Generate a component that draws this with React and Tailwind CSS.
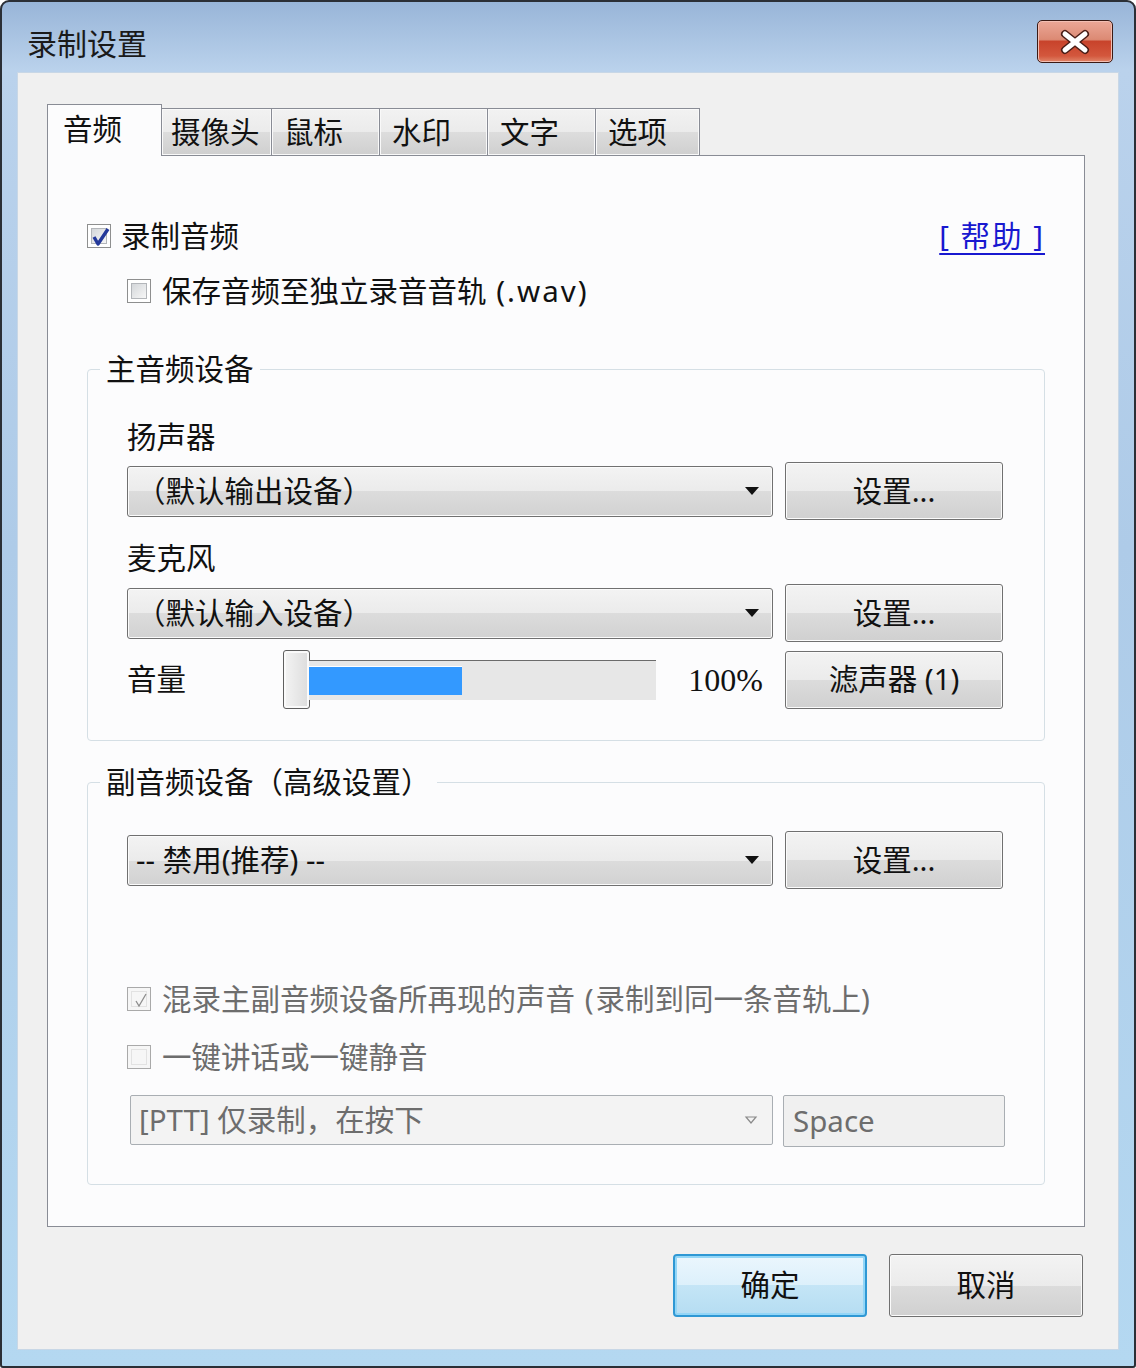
import React from "react";

// Win7 风格的按钮 / 下拉框渐变
const btnCls =
  "flex items-center justify-center rounded-[3px] border border-[#707070] bg-[linear-gradient(to_bottom,#f3f3f3_0%,#ebebeb_50%,#dcdcdc_50%,#d0d0d0_100%)] shadow-[inset_0_0_0_1px_#fbfbfb] text-[29.5px] text-[#111]";

function Arrow({ light }) {
  return (
    <svg width="14" height="8" viewBox="0 0 14 8">
      {light ? (
        <path d="M2 1 L12 1 L7 7 Z" fill="none" stroke="#8a8a8a" strokeWidth="1.2" />
      ) : (
        <path d="M0 0 L14 0 L7 8 Z" fill="#111" />
      )}
    </svg>
  );
}

function Combo({ text }) {
  return (
    <div className="flex h-[51px] w-[646px] items-center justify-between rounded-[3px] border border-[#707070] bg-[linear-gradient(to_bottom,#f3f3f3_0%,#ebebeb_50%,#dcdcdc_50%,#d2d2d2_100%)] pl-[8px] pr-[13px] text-[29.5px] text-[#111] shadow-[inset_0_0_0_1px_#fbfbfb]">
      <span>{text}</span>
      <Arrow />
    </div>
  );
}

function SettingBtn({ children }) {
  return <div className={`${btnCls} h-[58px] w-[218px]`}>{children}</div>;
}

function Check({ checked, dim }) {
  return (
    <span
      className={`flex h-[24px] w-[24px] shrink-0 items-center justify-center border p-[3px] ${
        dim ? "border-[#a9a9a9] bg-[#f6f6f6]" : "border-[#8e8f8f] bg-white"
      }`}
    >
      <span
        className={`relative flex h-full w-full items-center justify-center border ${
          dim
            ? "border-[#e2e2e2] bg-[#f6f6f6]"
            : "border-[#b3b6ba] bg-[linear-gradient(135deg,#d4d7da,#f7f7f7)]"
        }`}
      >
        {checked && !dim && (
          <svg className="absolute -left-[3px] -top-[3px]" width="24" height="24" viewBox="0 0 24 24">
            <path d="M5 11 L9 18 L19 3" fill="none" stroke="#24399a" strokeWidth="3.4" strokeLinejoin="round" />
          </svg>
        )}
        {checked && dim && (
          <svg className="absolute -left-[3px] -top-[3px]" width="24" height="24" viewBox="0 0 24 24">
            <path d="M7 12 L10 17 L17 5" fill="none" stroke="#8c8c8c" strokeWidth="1.3" />
          </svg>
        )}
      </span>
    </span>
  );
}

function Tab({ label, w, active, pl = "pl-[12px]" }) {
  if (active) {
    return (
      <div
        className={`${w} relative z-10 -mb-px h-[52px] border border-b-0 border-[#898c95] bg-[#fcfcfd] pl-[15px] pt-[4px] text-[29.5px] leading-[40px] text-[#111]`}
      >
        {label}
      </div>
    );
  }
  return (
    <div
      className={`${w} ${pl} -ml-px h-[47px] border border-b-0 border-[#898c95] bg-[linear-gradient(to_bottom,#f2f2f2_0%,#ebebeb_50%,#dddddd_50%,#cfcfcf_100%)] pt-[3px] text-[29.5px] leading-[40px] text-[#111] shadow-[inset_0_0_0_1px_#f9f9f9]`}
    >
      {label}
    </div>
  );
}

export default function App() {
  const tabs = [
    { label: "摄像头", w: "w-[111px]", pl: "pl-[9px]" },
    { label: "鼠标", w: "w-[109px]" },
    { label: "水印", w: "w-[109px]" },
    { label: "文字", w: "w-[109px]" },
    { label: "选项", w: "w-[105px]" },
  ];

  return (
    <div className="h-[1368px] w-[1136px] bg-white font-['Noto_Sans','Noto_Sans_CJK_SC',sans-serif]">
      <div className="flex h-full w-full flex-col rounded-t-[9px] rounded-b-[3px] border-2 border-[#2b2f36] bg-[linear-gradient(to_bottom,#98b5d8_0%,#bad2ec_5%,#aecbe8_40%,#b4d8f1_100%)]">
        {/* 标题栏 */}
        <div className="flex h-[70px] shrink-0 items-start justify-between pl-[25px] pr-[21px]">
          <span className="pt-[22px] text-[30px] leading-[40px] text-[#1a1a1a]">录制设置</span>
          <div className="mt-[18px] flex h-[43px] w-[76px] items-center justify-center rounded-[5px] border border-[#3b1a14] bg-[linear-gradient(to_bottom,#eba797_0%,#dc8a74_45%,#c8432b_50%,#d3573d_85%,#e0866a_100%)] shadow-[inset_0_0_0_1px_#f3bfb3]">
            <svg width="34" height="26" viewBox="0 0 34 26">
              <path d="M7 5 L27 21 M27 5 L7 21" stroke="#4a1d16" strokeWidth="8" strokeLinecap="round" />
              <path d="M7 5 L27 21 M27 5 L7 21" stroke="#ffffff" strokeWidth="5" strokeLinecap="round" />
            </svg>
          </div>
        </div>

        {/* 客户区 */}
        <div className="mx-[15px] flex h-[1278px] flex-col border border-[#c8d7e6] bg-[#f0f0f0] pl-[29px] pt-[31px]">
          <div className="flex items-end">
            <Tab label="音频" w="w-[115px]" active />
            {tabs.map((t) => (
              <Tab key={t.label} label={t.label} w={t.w} pl={t.pl} />
            ))}
          </div>

          <div className="h-[1072px] w-[1038px] border border-[#898c95] bg-[#fcfcfd] px-[39px] pt-[60px] text-[29.5px] text-[#111]">
            <div className="flex h-[40px] items-center justify-between leading-[40px]">
              <div className="flex items-center gap-[10px]">
                <Check checked />
                <span>录制音频</span>
              </div>
              <span className="cursor-pointer tracking-[2px] text-[#1818d0] underline decoration-[#1818d0] underline-offset-[6px]">
                [ 帮助 ]
              </span>
            </div>
            <div className="mt-[15px] flex h-[40px] items-center gap-[11px] pl-[40px] leading-[40px]">
              <Check />
              <span>
                保存音频至独立录音音轨<span className="tracking-[2px]"> (.wav)</span>
              </span>
            </div>

            {/* 主音频设备 */}
            <fieldset className="mt-[38px] min-w-0 rounded-[4px] border border-[#d5dfe5]">
              <legend className="ml-[12px] px-[6px] leading-[40px]">主音频设备</legend>
              <div className="pb-[30px] pl-[39px] pr-[41px]">
                <div className="mt-[28px] leading-[40px]">扬声器</div>
                <div className="mt-[5px] flex h-[58px] items-center gap-[12px]">
                  <Combo text="（默认输出设备）" />
                  <SettingBtn>设置...</SettingBtn>
                </div>
                <div className="mt-[18px] leading-[40px]">麦克风</div>
                <div className="mt-[6px] flex h-[58px] items-center gap-[12px]">
                  <Combo text="（默认输入设备）" />
                  <SettingBtn>设置...</SettingBtn>
                </div>
                <div className="mt-[7px] flex h-[61px] items-center">
                  <span className="w-[156px]">音量</span>
                  <div className="flex items-center">
                    <div className="h-[59px] w-[27px] rounded-[3px] border border-[#5f5f5f] bg-[linear-gradient(to_right,#f4f4f4,#dcdcdc)] shadow-[inset_0_0_0_2px_#fafafa]" />
                    <div className="-ml-px h-[40px] w-[347px] border-t border-[#6b6b6b] bg-[#e7e7e7] pt-[5px]">
                      <div className="h-[29px] w-[153px] border-t border-white bg-[#3399ff]" />
                    </div>
                  </div>
                  <span className="flex-1 pr-[22px] text-right font-['Liberation_Serif',serif] text-[32px]">100%</span>
                  <SettingBtn>滤声器 (1)</SettingBtn>
                </div>
              </div>
            </fieldset>

            {/* 副音频设备 */}
            <fieldset className="mt-[21px] min-w-0 rounded-[4px] border border-[#d5dfe5]">
              <legend className="ml-[12px] px-[6px] leading-[40px]">副音频设备（高级设置）</legend>
              <div className="pb-[37px] pl-[39px] pr-[41px]">
                <div className="mt-[29px] flex h-[58px] items-center gap-[12px]">
                  <Combo text="-- 禁用(推荐) --" />
                  <SettingBtn>设置...</SettingBtn>
                </div>
                <div className="mt-[90px] flex h-[40px] items-center gap-[11px] leading-[40px] text-[#6d6d6d]">
                  <Check checked dim />
                  <span>
                    混录主副音频设备所再现的声音<span className="tracking-[2px]"> (</span>录制到同一条音轨上<span className="tracking-[2px]">)</span>
                  </span>
                </div>
                <div className="mt-[18px] flex h-[40px] items-center gap-[11px] leading-[40px] text-[#6d6d6d]">
                  <Check dim />
                  <span>一键讲话或一键静音</span>
                </div>
                <div className="mt-[18px] flex h-[52px] items-start">
                  <div className="ml-[3px] flex h-[50px] w-[643px] shrink-0 items-center justify-between rounded-[2px] border border-[#a9aeb3] bg-[#f3f3f3] pl-[8px] pr-[14px] text-[#6d6d6d]">
                    <span>[PTT] 仅录制，在按下</span>
                    <Arrow light />
                  </div>
                  <div className="ml-[10px] flex h-[52px] w-[222px] shrink-0 items-center rounded-[2px] border border-[#a9aeb3] bg-[#f0f0f0] pl-[9px] text-[#6d6d6d]">
                    Space
                  </div>
                </div>
              </div>
            </fieldset>
          </div>

          {/* 底部按钮 */}
          <div className="mt-[27px] flex w-[1036px] justify-end gap-[22px]">
            <div className="flex h-[63px] w-[194px] items-center justify-center rounded-[4px] border-2 border-[#2f98d4] bg-[linear-gradient(to_bottom,#ebf6fd_0%,#dcf0fb_50%,#c4e5f6_50%,#b5ddf2_100%)] text-[29.5px] text-[#111] shadow-[inset_0_0_0_2px_#93d6f7]">
              确定
            </div>
            <div className={`${btnCls} h-[63px] w-[194px]`}>取消</div>
          </div>
        </div>
      </div>
    </div>
  );
}
